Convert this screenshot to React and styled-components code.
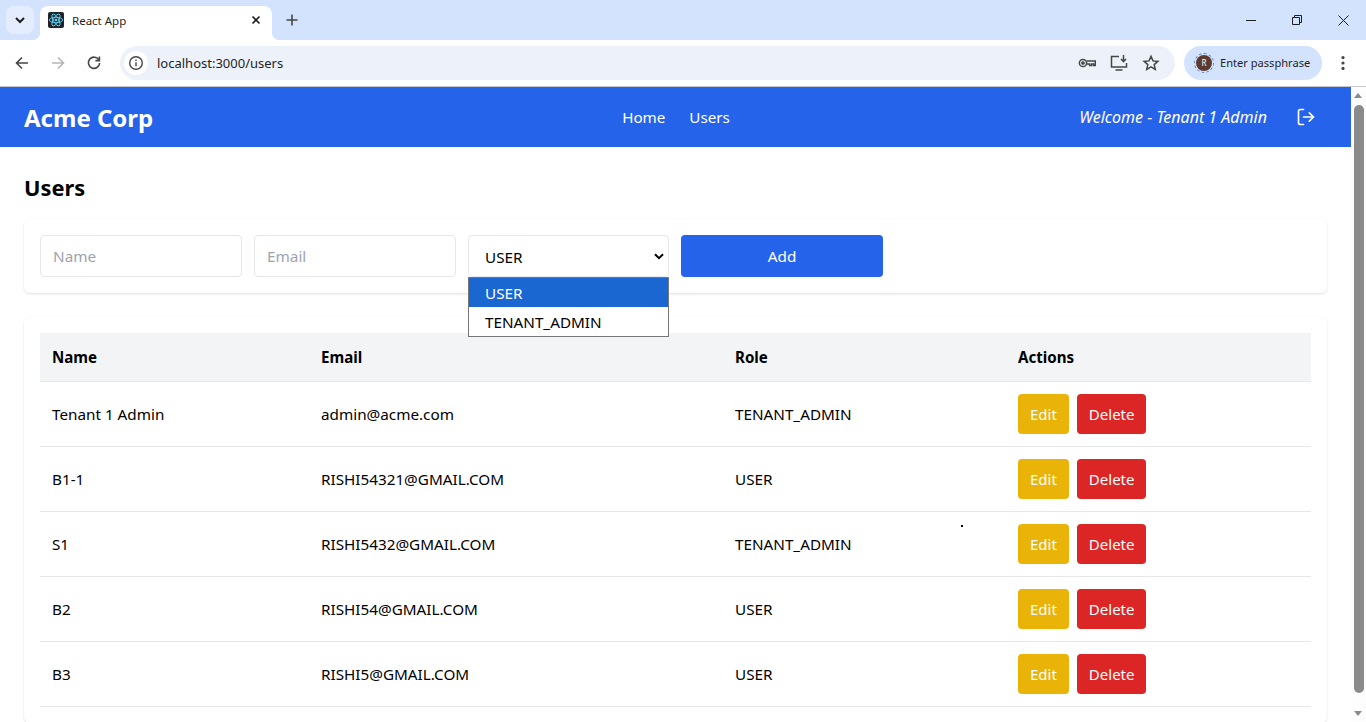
import { createGlobalStyle, styled } from "styled-components";

const users = [
  { name: "Tenant 1 Admin", email: "admin@acme.com", role: "TENANT_ADMIN" },
  { name: "B1-1", email: "RISHI54321@GMAIL.COM", role: "USER" },
  { name: "S1", email: "RISHI5432@GMAIL.COM", role: "TENANT_ADMIN" },
  { name: "B2", email: "RISHI54@GMAIL.COM", role: "USER" },
  { name: "B3", email: "RISHI5@GMAIL.COM", role: "USER" },
];

const App = () => {
  return (
    <Window>
      <GlobalStyle />

      <TabStrip>
        <TabSearch>
          <svg width="12" height="12" viewBox="0 0 12 12" fill="none" stroke="#1f1f1f" strokeWidth="2">
            <path d="M2 4l4 4 4-4" />
          </svg>
        </TabSearch>
        <Tab>
          <Favicon>
            <svg width="16" height="16" viewBox="-12 -12 24 24" fill="none" stroke="#61dafb" strokeWidth="1.3">
              <circle r="2" fill="#61dafb" stroke="none" />
              <ellipse rx="10" ry="4" />
              <ellipse rx="10" ry="4" transform="rotate(60)" />
              <ellipse rx="10" ry="4" transform="rotate(120)" />
            </svg>
          </Favicon>
          <TabTitle>React App</TabTitle>
          <svg width="10" height="10" viewBox="0 0 10 10" stroke="#1f1f1f" strokeWidth="1.6">
            <path d="M1.5 1.5l7 7M8.5 1.5l-7 7" />
          </svg>
        </Tab>
        <NewTab>
          <svg width="12" height="12" viewBox="0 0 12 12" stroke="#444746" strokeWidth="1.6">
            <path d="M6 .5v11M.5 6h11" />
          </svg>
        </NewTab>
        <WindowControls>
          <WindowButton>
            <svg width="10" height="10" viewBox="0 0 10 10" stroke="#1f1f1f"><path d="M0 5.5h10" /></svg>
          </WindowButton>
          <WindowButton>
            <svg width="10" height="10" viewBox="0 0 10 10" fill="none" stroke="#1f1f1f">
              <path d="M.5 2.5h7v7h-7zM2.5 2.5v-2h7v7h-2" />
            </svg>
          </WindowButton>
          <WindowButton>
            <svg width="11" height="11" viewBox="0 0 11 11" stroke="#1f1f1f"><path d="M.5.5l10 10M10.5.5l-10 10" /></svg>
          </WindowButton>
        </WindowControls>
      </TabStrip>

      <Toolbar>
        <ToolIcon>
          <svg width="16" height="16" viewBox="0 0 16 16" fill="none" stroke="#444746" strokeWidth="1.6">
            <path d="M14 8H2.5M8 2.5L2.5 8 8 13.5" />
          </svg>
        </ToolIcon>
        <ToolIcon>
          <svg width="16" height="16" viewBox="0 0 16 16" fill="none" stroke="#b4b6b8" strokeWidth="1.6">
            <path d="M2 8h11.5M8 2.5L13.5 8 8 13.5" />
          </svg>
        </ToolIcon>
        <ToolIcon>
          <svg width="16" height="16" viewBox="0 0 16 16" fill="none" stroke="#444746" strokeWidth="1.6">
            <path d="M13 5.2A5.6 5.6 0 1 0 13.6 8" />
            <path d="M13.4 1.6v4h-4" />
          </svg>
        </ToolIcon>
        <Omnibox>
          <InfoChip>
            <svg width="16" height="16" viewBox="0 0 16 16" fill="none" stroke="#444746" strokeWidth="1.4">
              <circle cx="8" cy="8" r="6.3" />
              <path d="M8 7.2v4M8 4.4v1.5" />
            </svg>
          </InfoChip>
          <Url>localhost:3000/users</Url>
          <OmniboxActions>
            <svg width="18" height="18" viewBox="0 0 18 18" fill="none" stroke="#444746" strokeWidth="1.5">
              <circle cx="5" cy="9" r="3.6" />
              <circle cx="5" cy="9" r="1.1" fill="#444746" />
              <path d="M8.6 7h8.7v4.4h-1.7v-1.3h-2v1.3h-2v-1.3H8.6" />
            </svg>
            <svg width="18" height="18" viewBox="0 0 18 18" fill="none" stroke="#444746" strokeWidth="1.5">
              <path d="M9 2.5H1.5v10.5h15V9" />
              <path d="M5.5 16h7" />
              <path d="M13.5 1v6.5M11 5l2.5 2.6L16 5" />
            </svg>
            <svg width="18" height="18" viewBox="0 0 18 18" fill="none" stroke="#444746" strokeWidth="1.5">
              <path d="M9 2.4l2 4.5 4.9.5-3.7 3.2 1.1 4.8L9 12.9l-4.3 2.5 1.1-4.8L2.1 7.4 7 6.9z" />
            </svg>
          </OmniboxActions>
        </Omnibox>
        <Profile>
          <Avatar>R</Avatar>
          <ProfileLabel>Enter passphrase</ProfileLabel>
        </Profile>
        <ToolIcon>
          <svg width="16" height="16" viewBox="0 0 16 16" fill="#444746">
            <circle cx="8" cy="2.6" r="1.6" />
            <circle cx="8" cy="8" r="1.6" />
            <circle cx="8" cy="13.4" r="1.6" />
          </svg>
        </ToolIcon>
      </Toolbar>

      <Viewport>
        <Page>
          <Navbar>
            <Brand>Acme Corp</Brand>
            <NavLinks>
              <NavLink>Home</NavLink>
              <NavLink>Users</NavLink>
            </NavLinks>
            <NavRight>
              <Welcome>Welcome - Tenant 1 Admin</Welcome>
              <svg width="20" height="20" viewBox="0 0 24 24" fill="none" stroke="#fff" strokeWidth="2" strokeLinecap="round" strokeLinejoin="round">
                <path d="M9 21H5a2 2 0 0 1-2-2V5a2 2 0 0 1 2-2h4" />
                <path d="M16 17l5-5-5-5" />
                <path d="M21 12H9" />
              </svg>
            </NavRight>
          </Navbar>

          <Main>
            <Heading>Users</Heading>

            <FormCard>
              <TextInput placeholder="Name" />
              <TextInput placeholder="Email" />
              <SelectWrap>
                <SelectBox>
                  USER
                  <svg width="10" height="7" viewBox="0 0 10 7" fill="none" stroke="#000" strokeWidth="2">
                    <path d="M1 1.2l4 4 4-4" />
                  </svg>
                </SelectBox>
                <Dropdown>
                  <Option $selected>USER</Option>
                  <Option>TENANT_ADMIN</Option>
                </Dropdown>
              </SelectWrap>
              <AddButton>Add</AddButton>
            </FormCard>

            <TableCard>
              <Table>
                <colgroup>
                  <col width="269" />
                  <col width="414" />
                  <col width="283" />
                  <col width="305" />
                </colgroup>
                <thead>
                  <tr>
                    <Th>Name</Th>
                    <Th>Email</Th>
                    <Th>Role</Th>
                    <Th>Actions</Th>
                  </tr>
                </thead>
                <tbody>
                  {users.map((user) => (
                    <tr key={user.email}>
                      <Td>{user.name}</Td>
                      <Td>{user.email}</Td>
                      <Td>{user.role}</Td>
                      <Td>
                        <Actions>
                          <ActionButton $color="#eab308">Edit</ActionButton>
                          <ActionButton $color="#dc2626">Delete</ActionButton>
                        </Actions>
                      </Td>
                    </tr>
                  ))}
                </tbody>
              </Table>
            </TableCard>
          </Main>
          <Speck />
        </Page>

        <Scrollbar>
          <ScrollArrow />
          <ScrollTrack>
            <ScrollThumb />
          </ScrollTrack>
          <ScrollArrow $down />
        </Scrollbar>
      </Viewport>
    </Window>
  );
};

export default App;

const GlobalStyle = createGlobalStyle`
  html, body {
    margin: 0;
    height: 100%;
    overflow: hidden;
    background: #fff;
  }

  * {
    box-sizing: border-box;
  }
`;

const Window = styled.div`
  display: flex;
  flex-direction: column;
  height: 722px;
  overflow: hidden;
  font-family: "Noto Sans", "Open Sans", sans-serif;
  color: #000;
`;

const TabStrip = styled.div`
  display: flex;
  align-items: flex-end;
  flex: none;
  height: 40px;
  padding-left: 6px;
  background: #d3e3fd;
`;

const TabSearch = styled.div`
  display: flex;
  align-items: center;
  justify-content: center;
  align-self: flex-start;
  width: 28px;
  height: 28px;
  margin-top: 6px;
  border-radius: 8px;
  background: #e3edfd;
`;

const Tab = styled.div`
  position: relative;
  display: flex;
  align-items: center;
  width: 232px;
  height: 34px;
  margin-left: 6px;
  padding: 0 11px 6px 8px;
  border-radius: 8px 8px 0 0;
  background: #fff;

  &::before,
  &::after {
    content: "";
    position: absolute;
    bottom: 0;
    width: 8px;
    height: 8px;
  }

  &::before {
    left: -8px;
    background: radial-gradient(circle at 0 0, transparent 8px, #fff 8.5px);
  }

  &::after {
    right: -8px;
    background: radial-gradient(circle at 100% 0, transparent 8px, #fff 8.5px);
  }
`;

const Favicon = styled.div`
  display: flex;
  align-items: center;
  justify-content: center;
  width: 16px;
  height: 16px;
  border-radius: 2px;
  background: #20232a;
`;

const TabTitle = styled.span`
  flex: 1;
  margin-left: 8px;
  font-size: 11.5px;
  color: #1f1f1f;
`;

const NewTab = styled.div`
  display: flex;
  align-items: center;
  justify-content: center;
  align-self: flex-start;
  width: 28px;
  height: 28px;
  margin: 6px 0 0 6px;
`;

const WindowControls = styled.div`
  display: flex;
  align-self: flex-start;
  margin-left: auto;
`;

const WindowButton = styled.div`
  display: flex;
  align-items: center;
  justify-content: center;
  width: 46px;
  height: 40px;
`;

const Toolbar = styled.div`
  display: flex;
  align-items: center;
  flex: none;
  height: 47px;
  padding: 0 6px 1px 6px;
  border-bottom: 1px solid #c7c7c7;
  border-radius: 8px 8px 0 0;
  background: #fff;
`;

const ToolIcon = styled.div`
  display: flex;
  align-items: center;
  justify-content: center;
  width: 32px;
  height: 32px;
  margin-right: 4px;

  &:last-child {
    margin: 0 0 0 5px;
  }
`;

const Omnibox = styled.div`
  display: flex;
  align-items: center;
  width: 1055px;
  height: 34px;
  margin-left: 6px;
  padding: 0 15px 0 4px;
  border-radius: 17px;
  background: #edf2fa;
`;

const InfoChip = styled.div`
  display: flex;
  align-items: center;
  justify-content: center;
  width: 24px;
  height: 24px;
  border-radius: 50%;
  background: #fff;
`;

const Url = styled.span`
  margin-left: 9px;
  font-size: 13px;
  color: #1f1f1f;
`;

const OmniboxActions = styled.div`
  display: flex;
  gap: 14px;
  margin-left: auto;
`;

const Profile = styled.div`
  display: flex;
  align-items: center;
  width: 138px;
  height: 34px;
  margin-left: 9px;
  padding-left: 12px;
  border-radius: 17px;
  background: #d3e3fd;
`;

const Avatar = styled.div`
  display: flex;
  align-items: center;
  justify-content: center;
  width: 16px;
  height: 16px;
  border-radius: 50%;
  outline: 1px dashed #5b7fb5;
  outline-offset: 1px;
  background: #5d3a2e;
  font-size: 8px;
  color: #fff;
`;

const ProfileLabel = styled.span`
  margin-left: 8px;
  font-size: 11.1px;
  color: #1f1f1f;
`;

const Viewport = styled.div`
  display: flex;
  flex: 1;
  min-height: 0;
`;

const Page = styled.div`
  position: relative;
  flex: 1;
  min-width: 0;
  overflow: hidden;
`;

const Navbar = styled.header`
  display: grid;
  grid-template-columns: 1fr auto 1fr;
  align-items: center;
  height: 60px;
  padding: 0 24px;
  background: #2563eb;
  color: #fff;
`;

const Brand = styled.div`
  font-size: 24px;
  font-weight: 700;
`;

const NavLinks = styled.nav`
  display: flex;
  gap: 24px;
  margin-left: 1px;
`;

const NavLink = styled.a`
  font-size: 15.2px;
  color: #fff;
`;

const NavRight = styled.div`
  display: flex;
  align-items: center;
  justify-content: flex-end;
  gap: 29px;
  padding-right: 11px;
`;

const Welcome = styled.span`
  font-size: 16px;
  font-style: italic;
`;

const Main = styled.main`
  padding: 25px 24px 24px;
`;

const Heading = styled.h1`
  margin: 0 0 15px;
  font-size: 21.8px;
  font-weight: 700;
  line-height: 32px;
`;

const Card = styled.section`
  border-radius: 6px;
  background: #fff;
  box-shadow: 0 1px 3px rgba(0, 0, 0, 0.1), 0 1px 2px -1px rgba(0, 0, 0, 0.1);
`;

const FormCard = styled(Card)`
  display: flex;
  gap: 12px;
  padding: 16px;
  margin-bottom: 24px;
`;

const TextInput = styled.input`
  width: 202px;
  height: 42px;
  padding: 0 12px;
  border: 1px solid #e5e7eb;
  border-radius: 4px;
  outline: none;
  font: inherit;
  font-size: 15.3px;

  &::placeholder {
    color: #9ca3af;
  }
`;

const SelectWrap = styled.div`
  position: relative;
  width: 201px;
  height: 42px;
`;

const SelectBox = styled.div`
  display: flex;
  align-items: center;
  justify-content: space-between;
  height: 100%;
  padding: 1px 4px 0 16px;
  border: 1px solid #e5e7eb;
  border-radius: 4px;
  font-size: 15.25px;
`;

const Dropdown = styled.div`
  position: absolute;
  top: 42px;
  left: 0;
  z-index: 5;
  width: 100%;
  border: 1px solid #767676;
  background: #fff;
`;

const Option = styled.div`
  height: 29px;
  padding: 1px 0 0 16px;
  background: ${({ $selected }) => ($selected ? "#1a67d2" : "#fff")};
  color: ${({ $selected }) => ($selected ? "#fff" : "#000")};
  font-size: 15.25px;
  line-height: 28px;
`;

const AddButton = styled.button`
  width: 202px;
  height: 42px;
  border: 0;
  border-radius: 4px;
  background: #2563eb;
  color: #fff;
  font: inherit;
  font-size: 15.3px;
`;

const TableCard = styled(Card)`
  padding: 16px;
`;

const Table = styled.table`
  width: 100%;
  table-layout: fixed;
  border-collapse: collapse;
`;

const Th = styled.th`
  height: 48px;
  padding: 0 12px;
  border-bottom: 1px solid #e5e7eb;
  background: #f3f4f6;
  font-size: 15.1px;
  font-weight: 700;
  text-align: left;
`;

const Td = styled.td`
  height: 65px;
  padding: 0 12px;
  border-bottom: 1px solid #e5e7eb;
  font-size: 15.25px;
`;

const Actions = styled.div`
  display: flex;
  gap: 8px;
`;

const ActionButton = styled.button`
  height: 40px;
  padding: 0 12px;
  border: 0;
  border-radius: 4px;
  background: ${({ $color }) => $color};
  color: #fff;
  font: inherit;
  font-size: 15px;
`;

const Speck = styled.div`
  position: absolute;
  top: 438px;
  left: 961px;
  width: 2px;
  height: 2px;
  background: #000;
`;

const Scrollbar = styled.div`
  display: flex;
  flex: none;
  flex-direction: column;
  width: 15px;
  background: #fdfdfd;
`;

const ScrollArrow = styled.div`
  flex: none;
  width: 0;
  height: 0;
  margin: ${({ $down }) => ($down ? "5px 3px 6px" : "6px 3px 5px")};
  border-right: 4.5px solid transparent;
  border-left: 4.5px solid transparent;
  border-top: ${({ $down }) => ($down ? "5px solid #8a8a8a" : "0")};
  border-bottom: ${({ $down }) => ($down ? "0" : "5px solid #8a8a8a")};
`;

const ScrollTrack = styled.div`
  flex: 1;
  padding: 2px 2px 0;
`;

const ScrollThumb = styled.div`
  width: 10px;
  height: 588px;
  margin: 0 auto;
  border-radius: 5px;
  background: #8a8a8a;
`;
